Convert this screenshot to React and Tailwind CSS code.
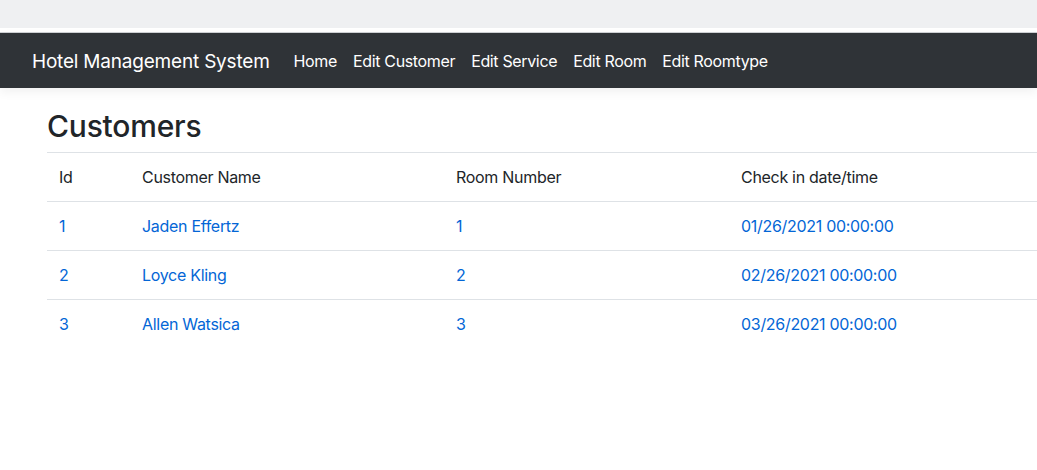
const navLinks = ['Home', 'Edit Customer', 'Edit Service', 'Edit Room', 'Edit Roomtype'];

const customers = [
    { id: 1, name: 'Jaden Effertz', room: 1, checkIn: '01/26/2021 00:00:00' },
    { id: 2, name: 'Loyce Kling', room: 2, checkIn: '02/26/2021 00:00:00' },
    { id: 3, name: 'Allen Watsica', room: 3, checkIn: '03/26/2021 00:00:00' },
];

export default function App() {
    return (
        <div className="min-h-[470px] bg-white text-[#212529] font-['Inter','Liberation_Sans',sans-serif]">
            <div className="h-[28px] bg-[#eff0f2]" />
            <div className="h-[5px] bg-white border-b border-[#cfd1d4]" />
            <nav className="h-[55px] bg-[#2f3337] flex items-center px-[32px] shadow-[0_4px_10px_rgba(0,0,0,0.06)]">
                <span className="text-white text-[19px] mr-[24px] pt-[3px] tracking-[-0.2px]">Hotel Management System</span>
                <div className="flex gap-[16px]">
                    {navLinks.map(l => (
                        <a key={l} className="text-white text-[16px] tracking-[-0.35px]">{l}</a>
                    ))}
                </div>
            </nav>
            <main className="pl-[47px] pt-[18px]">
                <h1 className="text-[30px] font-medium leading-[40px] mb-[6px] tracking-[-0.2px]">Customers</h1>
                <table className="w-[1000px] text-[16px] tracking-[-0.3px]">
                    <thead>
                        <tr className="border-t border-b border-[#dee2e6] h-[49px]">
                            {['Id', 'Customer Name', 'Room Number', 'Check in date/time'].map((h, i) => (
                                <th key={h} className={`px-[12px] text-left font-normal ${['w-[83px]', 'w-[314px]', 'w-[285px]', ''][i]}`}>{h}</th>
                            ))}
                        </tr>
                    </thead>
                    <tbody>
                        {customers.map((c, i) => (
                            <tr key={c.id} className={`h-[49px] text-[#0366d6] ${i < customers.length - 1 ? 'border-b border-[#dee2e6]' : ''}`}>
                                <td className="px-[12px]">{c.id}</td>
                                <td className="px-[12px]">{c.name}</td>
                                <td className="px-[12px]">{c.room}</td>
                                <td className="px-[12px]">{c.checkIn}</td>
                            </tr>
                        ))}
                    </tbody>
                </table>
            </main>
        </div>
    );
}
